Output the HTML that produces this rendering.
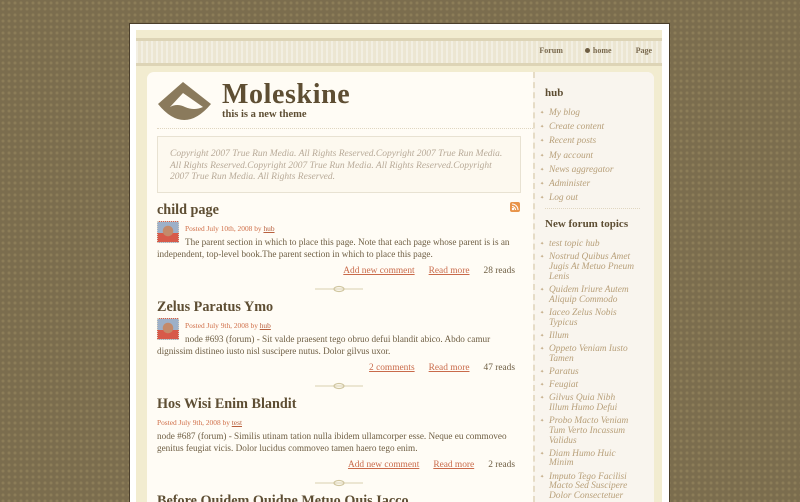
<!DOCTYPE html>
<html><head><meta charset="utf-8"><style>
*{margin:0;padding:0;box-sizing:border-box}
html,body{width:800px;height:502px;overflow:hidden}
body{background:#7b6d4e;font-family:"Liberation Serif",serif;position:relative;
background-image:radial-gradient(circle,rgba(160,145,100,.45) 1px,transparent 2px);background-size:6px 6px}
#frame{position:absolute;left:130px;top:24px;width:539px;height:478px;background:#fff;box-shadow:0 0 0 1px #4a3e2a;overflow:hidden}
#inner{position:absolute;left:6px;top:6px;width:526px;height:472px;background:#f2ecd0;overflow:hidden}
#band{position:absolute;left:0;top:8px;width:526px;height:28px;background:#ece6d2;border-top:3px solid #ddd4b6;border-bottom:3px solid #ddd4b6;
background-image:repeating-linear-gradient(90deg,rgba(255,255,255,.35) 0 2px,transparent 2px 5px)}
#nav{position:absolute;right:10px;top:16px;font-size:8px;font-weight:bold;color:#7a6a4f}
#nav span{margin-left:22px}
#nav .dot{display:inline-block;width:5px;height:5px;border-radius:50%;background:#6e5e43;margin-right:3px;vertical-align:0}
#content{position:absolute;left:11px;top:42px;width:507px;height:430px;background:#fffcf5;border-radius:7px 7px 0 0;overflow:hidden}
#side{position:absolute;left:386px;top:0;width:121px;height:430px;background:#f9f5ee;border-left:2px dashed #e6dcc6;overflow:hidden}
#logo{position:absolute;left:10px;top:8px}
#title{position:absolute;left:75px;top:7px;font-size:28px;font-weight:bold;color:#5e4e33;letter-spacing:.6px}
#slogan{position:absolute;left:75px;top:37px;font-size:10.5px;font-weight:bold;color:#5e4e33}
#hr1{position:absolute;left:10px;top:56px;width:376px;border-top:1px dotted #e0d6c0}
#mission{position:absolute;left:10px;top:64px;width:364px;height:57px;border:1px solid #e8e2d2;background:#fdf9ef;padding:12px 12px;font-style:italic;font-size:9.5px;line-height:11.5px;color:#b8aa98}
.post{position:absolute;left:10px;width:364px;color:#6e5e43}
.post h2{font-size:14.2px;font-weight:bold;color:#5e4e33}
.post .pic{position:absolute;left:0;top:19px;width:22px;height:22px;border:1px dotted #d8d0c0;background:radial-gradient(circle at 50% 45%,#c48a6a 0 5px,transparent 5.5px),linear-gradient(#9db0c8 0 55%,#d75a4a 55%)}
.post .meta{font-size:7.4px;color:#d0704a;margin:5px 0 0 28px}
.post .meta u{color:#b8603e}
.post p{font-size:9.2px;line-height:12px;margin-top:3px;text-indent:28px}
.post p.ni{text-indent:0}
.links{text-align:right;font-size:9.4px;margin-top:6px;color:#6e5e43;padding-right:6px}
.links u{color:#c96a4a;margin-right:14px}
.sep{position:absolute;left:167px;width:50px;height:8px}
#side h3{font-size:11px;font-weight:bold;color:#5e4e33;margin:0 0 0 10px}
#side ul{list-style:none;margin:10px 17px 0 5px}
#side li{font-style:italic;font-size:9.4px;color:#b8a07a;padding-left:9px;position:relative;line-height:9.8px;margin-bottom:4.4px}
#side ul.m li{margin-bottom:3.3px}
#side li:before{content:"✦";position:absolute;left:0;top:0;font-size:5px;font-style:normal;color:#c0a880}
</style></head><body>
<div id="frame"><div id="inner">
<div id="band"></div>
<div id="nav"><span>Forum</span><span><i class="dot"></i>home</span><span style="margin-left:24px">Page</span></div>
<div id="content">
<svg id="logo" width="56" height="44" viewBox="0 0 56 44"><path d="M26 2 L1 24 Q27 56 54 24 Z" fill="#8a7a5c"/><path d="M26 13 L13 27 Q20 23 28 27 Q37 31 46 27 Z" fill="#fffcf5"/></svg>
<div id="title">Moleskine</div>
<div id="slogan">this is a new theme</div>
<div id="hr1"></div>
<div id="mission">Copyright 2007 True Run Media. All Rights Reserved.Copyright 2007 True Run Media. All Rights Reserved.Copyright 2007 True Run Media. All Rights Reserved.Copyright 2007 True Run Media. All Rights Reserved.</div>
<svg style="position:absolute;left:363px;top:130px" width="10" height="10"><rect width="10" height="10" rx="2" fill="#e8944a"/><circle cx="3" cy="7" r="1.2" fill="#fff"/><path d="M2 4.5a3.5 3.5 0 0 1 3.5 3.5M2 2a6 6 0 0 1 6 6" stroke="#fff" fill="none" stroke-width="1.1"/></svg>

<div class="post" style="top:130px"><h2>child page</h2><div class="pic"></div>
<div class="meta">Posted July 10th, 2008 by <u>hub</u></div>
<p>The parent section in which to place this page. Note that each page whose parent is is an independent, top-level book.The parent section in which to place this page.</p>
<div class="links"><u>Add new comment</u><u>Read more</u>28 reads</div></div>
<svg class="sep" style="top:213px" viewBox="0 0 50 8"><line x1="1" y1="4" x2="49" y2="4" stroke="#d8cfae" stroke-width="1"/><ellipse cx="25" cy="4" rx="5" ry="2.5" fill="none" stroke="#d0c6a0" stroke-width="1.2"/></svg>

<div class="post" style="top:227px"><h2>Zelus Paratus Ymo</h2><div class="pic"></div>
<div class="meta">Posted July 9th, 2008 by <u>hub</u></div>
<p>node #693 (forum) - Sit valde praesent tego obruo defui blandit abico. Abdo camur dignissim distineo iusto nisl suscipere nutus. Dolor gilvus uxor.</p>
<div class="links"><u>2 comments</u><u>Read more</u>47 reads</div></div>
<svg class="sep" style="top:310px" viewBox="0 0 50 8"><line x1="1" y1="4" x2="49" y2="4" stroke="#d8cfae" stroke-width="1"/><ellipse cx="25" cy="4" rx="5" ry="2.5" fill="none" stroke="#d0c6a0" stroke-width="1.2"/></svg>

<div class="post" style="top:324px"><h2>Hos Wisi Enim Blandit</h2>
<div class="meta" style="margin-left:0">Posted July 9th, 2008 by <u>test</u></div>
<p class="ni">node #687 (forum) - Similis utinam tation nulla ibidem ullamcorper esse. Neque eu commoveo genitus feugiat vicis. Dolor lucidus commoveo tamen haero tego enim.</p>
<div class="links"><u>Add new comment</u><u>Read more</u>2 reads</div></div>
<svg class="sep" style="top:407px" viewBox="0 0 50 8"><line x1="1" y1="4" x2="49" y2="4" stroke="#d8cfae" stroke-width="1"/><ellipse cx="25" cy="4" rx="5" ry="2.5" fill="none" stroke="#d0c6a0" stroke-width="1.2"/></svg>
<div class="post" style="top:421px"><h2>Before Quidem Quidne Metuo Quis Iacco</h2></div>

<div id="side">
<h3 style="margin-top:15px">hub</h3>
<ul><li>My blog</li><li>Create content</li><li>Recent posts</li><li>My account</li><li>News aggregator</li><li>Administer</li><li>Log out</li></ul>
<div style="margin:2px 14px 0 10px;border-top:1px dotted #e0d6c0"></div>
<h3 style="margin-top:9px">New forum topics</h3>
<ul class="m" style="margin-top:10px"><li>test topic hub</li><li>Nostrud Quibus Amet Jugis At Metuo Pneum Lenis</li><li>Quidem Iriure Autem Aliquip Commodo</li><li>Iaceo Zelus Nobis Typicus</li><li>Illum</li><li>Oppeto Veniam Iusto Tamen</li><li>Paratus</li><li>Feugiat</li><li>Gilvus Quia Nibh Illum Humo Defui</li><li>Probo Macto Veniam Tum Verto Incassum Validus</li><li>Diam Humo Huic Minim</li><li>Imputo Tego Facilisi Macto Sed Suscipere Dolor Consectetuer</li><li>Zelus Paratus Ymo</li><li>Suscipere Tego Huic</li></ul>
</div>
</div>
</div></div>
</body></html>
